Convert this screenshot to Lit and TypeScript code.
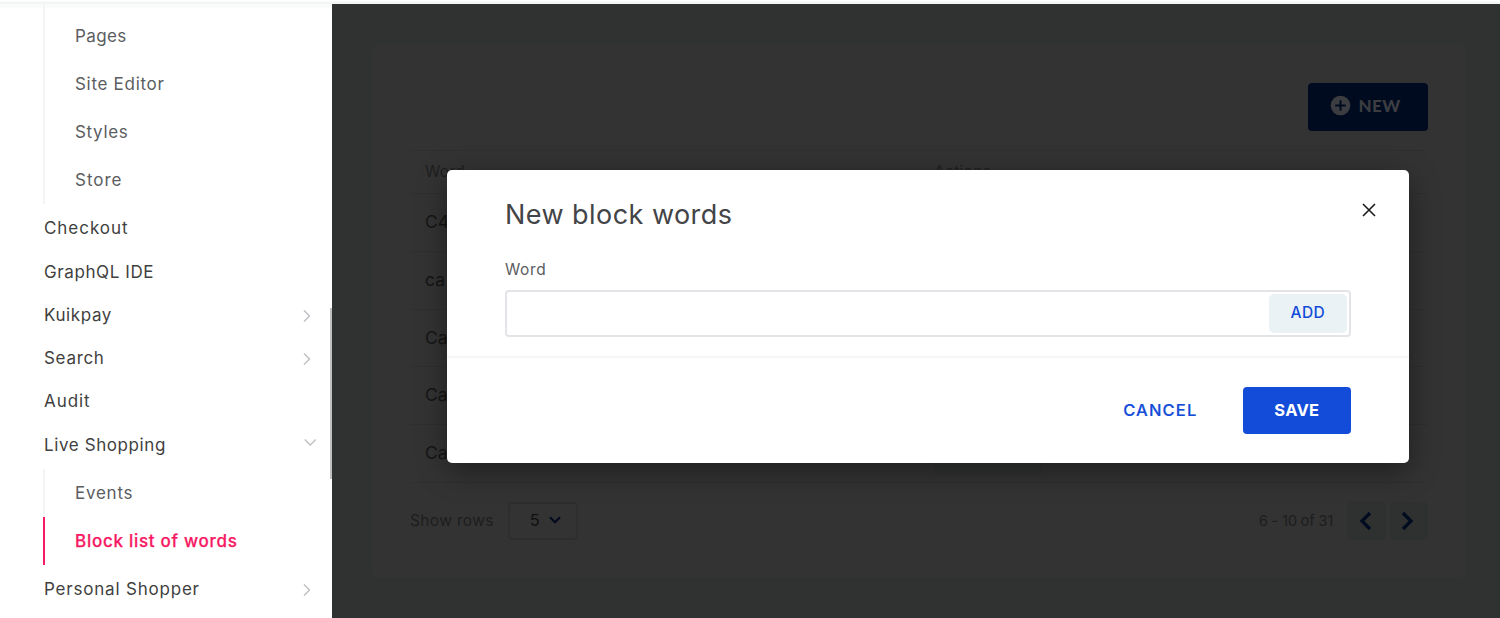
import { LitElement, html, css, svg } from "lit";
import { customElement, property } from "lit/decorators.js";
import { styleMap } from "lit/directives/style-map.js";

interface Label { text: string; track: number; arrow?: "right" | "down"; active?: boolean }

const PAGES: Label[] = [
  { text: "Pages", track: 0.4 },
  { text: "Site Editor", track: 0.7 },
  { text: "Styles", track: 0.65 },
  { text: "Store", track: 1 },
];
const MENU: Label[] = [
  { text: "Checkout", track: 0.95 },
  { text: "GraphQL IDE", track: 0.6 },
  { text: "Kuikpay", track: 0.6, arrow: "right" },
  { text: "Search", track: 0.7, arrow: "right" },
  { text: "Audit", track: 0.95 },
  { text: "Live Shopping", track: 0.6, arrow: "down" },
];
const LIVE: Label[] = [
  { text: "Events", track: 0.75 },
  { text: "Block list of words", track: 0.72, active: true },
];
const MENU_END: Label[] = [{ text: "Personal Shopper", track: 0.8, arrow: "right" }];

@customElement("side-menu")
export class SideMenu extends LitElement {
  static styles = css`
    :host { display: block; box-sizing: border-box; width: 332px; flex: none;
      background: linear-gradient(#f9fbfb 0 3px, #fff 5px);
      padding: 0 0 0 43px; overflow: hidden; position: relative; font-size: 17px; color: #3f3f40; }
    .sub { border-left: 2px solid #f3f4f6; color: #5b5d5f; }
    .sub:first-of-type { padding-top: 8px; }
    .subitem { box-sizing: border-box; height: 48px; display: flex; align-items: center; padding: 0 0 0 30px; }
    .active { margin-left: -2px; border-left: 2px solid #f71963; color: #f71963; font-weight: 500; -webkit-text-stroke: .25px #f71963; }
    .list { padding: 2.6px 0 2.4px; }
    .item { height: 43.3px; display: flex; align-items: center; justify-content: space-between; padding: 0 16px 0 1px; }
    .arrow { width: 17px; height: 14px; fill: none; stroke: #bfc1c4; stroke-width: 1.5; flex: none; margin-top: 2px; }
    .arrow.down { margin-top: -5px; }
    .thumb { position: absolute; right: 0; top: 304px; width: 2px; height: 171px; background: #c1c1c1; }
  `;
  private span(l: Label) {
    return html`<span style=${styleMap({ letterSpacing: `${l.track}px` })}>${l.text}</span>`;
  }
  private sub(items: Label[]) {
    return html`<div class="sub">${items.map(
      (i) => html`<div class="subitem ${i.active ? "active" : ""}">${this.span(i)}</div>`)}</div>`;
  }
  private list(items: Label[]) {
    return html`<div class="list">${items.map((i) => html`<div class="item">${this.span(i)}
      ${i.arrow ? html`<svg class="arrow ${i.arrow}" viewBox="0 0 17 14">${i.arrow === "right"
        ? svg`<path d="M5 1.5l5.5 5.5L5 12.5"/>` : svg`<path d="M5.8 4.5l5.5 5.5 5.5-5.5"/>`}</svg>` : ""}</div>`)}</div>`;
  }
  render() {
    return html`${this.sub(PAGES)}${this.list(MENU)}${this.sub(LIVE)}${this.list(MENU_END)}<div class="thumb"></div>`;
  }
}

@customElement("word-table")
export class WordTable extends LitElement {
  @property({ attribute: false }) rows = ["C4", "ca", "Ca", "Ca", "Ca"];
  static styles = css`
    :host { display: block; box-sizing: border-box; width: 1094px; height: 534px; margin: 40px 0 0 40px;
      padding: 39.4px 38px 0; border-radius: 8px; background: #333; }
    .bar { display: flex; justify-content: flex-end; height: 67px; align-items: flex-start; }
    .new { box-sizing: border-box; width: 120px; height: 48px; border-radius: 4px; background: #000b20;
      display: flex; align-items: center; padding: 0 0 3px 21.5px; gap: 8px; color: #3b3d40;
      font: 900 17px Lato, sans-serif; letter-spacing: .4px; }
    .plus { width: 21px; height: 21px; }
    .row { box-sizing: border-box; height: 57.7px; border-top: 1px solid #2e2f2f; display: grid;
      grid-template-columns: 509px 1fr; padding: 0 0 2px 15px; align-items: center; font-size: 17.5px; color: #151515; }
    .head { height: 43px; font-size: 15.5px; color: #1e1f1f; letter-spacing: .3px; }
    .remove { box-sizing: border-box; width: 109px; height: 46px; border-radius: 4px; background: #303131; }
    .foot { border-top: 1px solid #2e2f2f; padding-top: 19px; display: flex; align-items: center; color: #1d1e1e;
      font-size: 15.5px; letter-spacing: .35px; }
    .foot > span { padding-bottom: 1px; }
    .select { box-sizing: border-box; width: 70px; height: 38px; margin-left: 14px; border: 2px solid #2d2e2e;
      border-radius: 4px; display: flex; align-items: center; padding: 0 0 1px 20px; gap: 8px; font-size: 16.5px; color: #101111; }
    .chev { width: 14px; height: 10px; fill: none; stroke: #030a1f; stroke-width: 2.1; }
    .range { margin-left: auto; margin-right: 10px; font-size: 15px; letter-spacing: -.35px; }
    .page { width: 38.5px; height: 38px; border-radius: 5px; background: #2f3131; display: flex; align-items: center;
      justify-content: center; margin-left: 4px; }
    .nav { width: 20px; height: 20px; fill: none; stroke: #000b20; stroke-width: 3.2; }
    .nav.next { margin-right: 3px; }
  `;
  render() {
    return html`
      <div class="bar"><div class="new">
        <svg class="plus" viewBox="0 0 21 21"><circle cx="10.5" cy="10.5" r="9.8" fill="#3b3d40"/>
          <path d="M10.5 5.2v10.6M5.2 10.5h10.6" stroke="#000b20" stroke-width="2"/></svg>
        <span>NEW</span></div></div>
      <div class="row head"><span>Word</span><span>Actions</span></div>
      ${this.rows.map((r) => html`<div class="row"><span>${r}</span><span class="remove"></span></div>`)}
      <div class="foot"><span>Show rows</span>
        <div class="select"><span>5</span><svg class="chev" viewBox="0 0 14 10"><path d="M2 2.2l5 5 5-5"/></svg></div>
        <span class="range">6 - 10 of 31</span>
        <div class="page"><svg class="nav" viewBox="0 0 20 20"><path d="M14 2L6 10l8 8"/></svg></div>
        <div class="page"><svg class="nav next" viewBox="0 0 20 20"><path d="M6 2l8 8-8 8"/></svg></div>
      </div>`;
  }
}

@customElement("new-word-dialog")
export class NewWordDialog extends LitElement {
  static styles = css`
    :host { position: absolute; left: 447px; top: 169.7px; width: 962.4px; height: 293.5px; border-radius: 5px;
      background: #fff; box-shadow: 0 8px 30px rgba(0, 0, 0, .4); display: flex; flex-direction: column; }
    .body { box-sizing: border-box; height: 186px; padding: 0 58.5px 0 58px; }
    .title { display: flex; justify-content: space-between; align-items: center; height: 88px; color: #434447;
      font-size: 27px; letter-spacing: .45px; }
    .title span { padding-top: 1.5px; }
    .close { width: 14px; height: 14px; margin-right: -25.5px; margin-top: -8px; fill: none; stroke: #1b1b1c; stroke-width: 1.6; }
    .label { display: block; height: 32px; line-height: 24px; color: #5b5c5f; font-size: 15.5px; letter-spacing: .6px; }
    .field { box-sizing: border-box; height: 47px; border: 2px solid #e3e4e8; border-radius: 4px; padding: 2px;
      display: flex; justify-content: flex-end; }
    .add { box-sizing: border-box; width: 78px; border-radius: 5px; background: #ebf2f6; color: #134cd8; font-size: 15.5px; font-weight: 500;
      letter-spacing: .4px; display: flex; align-items: center; justify-content: center; padding-bottom: 1px; }
    .foot { flex: 1; border-top: 2px solid #f5f6f7; display: flex; justify-content: flex-end; align-items: flex-start;
      padding: 29px 58.5px 0 0; gap: 45.5px; font-weight: 500; font-size: 16.5px; }
    .cancel { color: #134cd8; line-height: 46px; letter-spacing: 1.15px; -webkit-text-stroke: .2px #134cd8; }
    .save { width: 108px; height: 47.5px; line-height: 46px; border-radius: 4px; background: #134cd8; color: #fff;
      text-align: center; font-weight: 700; letter-spacing: .3px; }
  `;
  render() {
    return html`<div class="body">
        <div class="title"><span>New block words</span>
          <svg class="close" viewBox="0 0 14 14"><path d="M1 1l12 12M13 1L1 13"/></svg></div>
        <span class="label">Word</span>
        <div class="field"><div class="add">ADD</div></div>
      </div>
      <div class="foot"><span class="cancel">CANCEL</span><div class="save">SAVE</div></div>`;
  }
}

@customElement("app-root")
export class AppRoot extends LitElement {
  static styles = css`
    :host { display: flex; flex-direction: column; position: relative; height: 618px; overflow: hidden;
      font-family: Inter, "Liberation Sans", sans-serif; background: #fff; }
    .top { height: 4px; flex: none; background: linear-gradient(#fff 0 1px, #f3f5f5 2px 4px); }
    .shell { flex: 1; display: flex; min-height: 0; }
    .main { flex: 1; background: #2f3230; overflow: hidden; }
  `;
  render() {
    return html`<div class="top"></div>
      <div class="shell"><side-menu></side-menu><div class="main"><word-table></word-table></div></div>
      <new-word-dialog></new-word-dialog>`;
  }
}
